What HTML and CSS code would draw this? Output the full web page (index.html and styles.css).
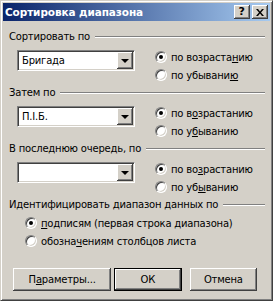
FILE: index.html
```html
<!DOCTYPE html>
<html>
  <head>
    <meta charset="UTF-8" />
    <title>Сортировка диапазона</title>
    <link rel="stylesheet" href="styles.css">
  </head>

  <body>
    <div class="dialog">
      <div class="titlebar">
        <span class="title">Сортировка диапазона</span>
        <div class="title-buttons">
          <div class="tbtn help">?</div>
          <div class="tbtn close">
            <svg width="8" height="7" viewBox="0 0 8 7">
              <path d="M0 0h2l2 2.5L6 0h2L5 3.5 8 7H6L4 4.5 2 7H0l3-3.5z" fill="#000" />
            </svg>
          </div>
        </div>
      </div>

      <div class="content">
        <div class="section">
          <div class="section-head">
            <span>Сортировать по</span>
            <div class="etched"></div>
          </div>
          <div class="section-row">
            <div class="combo">
              <span class="combo-text">Бригада</span>
              <div class="combo-btn"><div class="arrow"></div></div>
            </div>
            <div class="radios">
              <div class="radio-item"><span class="radio checked"></span>по возраста<u>н</u>ию</div>
              <div class="radio-item"><span class="radio"></span>по убывани<u>ю</u></div>
            </div>
          </div>
        </div>

        <div class="section">
          <div class="section-head">
            <span>Затем по</span>
            <div class="etched"></div>
          </div>
          <div class="section-row">
            <div class="combo">
              <span class="combo-text">П.І.Б.</span>
              <div class="combo-btn"><div class="arrow"></div></div>
            </div>
            <div class="radios">
              <div class="radio-item"><span class="radio checked"></span>по в<u>о</u>зрастанию</div>
              <div class="radio-item"><span class="radio"></span>по у<u>б</u>ыванию</div>
            </div>
          </div>
        </div>

        <div class="section">
          <div class="section-head">
            <span>В последнюю очередь, по</span>
            <div class="etched"></div>
          </div>
          <div class="section-row">
            <div class="combo">
              <span class="combo-text"></span>
              <div class="combo-btn"><div class="arrow"></div></div>
            </div>
            <div class="radios">
              <div class="radio-item"><span class="radio checked"></span>по во<u>з</u>растанию</div>
              <div class="radio-item"><span class="radio"></span>по уб<u>ы</u>ванию</div>
            </div>
          </div>
        </div>

        <div class="section">
          <div class="section-head">
            <span>Идентифицировать диапазон данных по</span>
            <div class="etched"></div>
          </div>
          <div class="radios wide">
            <div class="radio-item"><span class="radio checked"></span><u>п</u>одписям (первая строка диапазона)</div>
            <div class="radio-item"><span class="radio"></span>обозна<u>ч</u>ениям столбцов листа</div>
          </div>
        </div>

        <div class="buttons">
          <div class="button params">П<u>а</u>раметры...</div>
          <div class="button default">ОК</div>
          <div class="button">Отмена</div>
        </div>
      </div>
    </div>
  </body>
</html>
```

FILE: styles.css
```css
* {
  box-sizing: border-box;
}

body {
  margin: 0;
  font-family: "DejaVu Sans", "Liberation Sans", sans-serif;
  font-size: 10px;
  letter-spacing: -0.2px;
  background-color: #d4d0c8;
}

.dialog {
  width: 273px;
  height: 301px;
  background-color: #d4d0c8;
  border: 1px solid;
  border-color: #d4d0c8 #404040 #404040 #d4d0c8;
  box-shadow: inset 1px 1px #fff, inset -1px -1px #808080;
  padding: 2px;
  display: flex;
  flex-direction: column;
}

.titlebar {
  height: 18px;
  background: linear-gradient(to right, #0a246a, #a6caf0);
  display: flex;
  align-items: center;
  justify-content: space-between;
  padding: 0 2px 0 2px;
}

.title {
  color: #fff;
  font-weight: bold;
  font-size: 10.5px;
  letter-spacing: -0.1px;
}

.title-buttons {
  display: flex;
  gap: 2px;
}

.tbtn {
  width: 16px;
  height: 14px;
  background-color: #d4d0c8;
  box-shadow: inset -1px -1px #404040, inset 1px 1px #fff, inset -2px -2px #808080;
  display: flex;
  align-items: center;
  justify-content: center;
}

.tbtn.help {
  font-weight: bold;
  font-size: 11px;
  line-height: 14px;
  padding-right: 1px;
}

.content {
  flex: 1;
  padding: 9px 5px 0 6px;
  display: flex;
  flex-direction: column;
}

.section {
  height: 56px;
}

.section-head {
  display: flex;
  align-items: center;
  height: 13px;
  color: #000;
}

.etched {
  flex: 1;
  height: 2px;
  margin-left: 5px;
  border-top: 1px solid #808080;
  border-bottom: 1px solid #fff;
}

.section-row {
  display: flex;
  align-items: flex-start;
  margin-top: 5px;
  padding-left: 8px;
}

.combo {
  width: 118px;
  height: 21px;
  margin-top: 2px;
  background-color: #fff;
  border: 1px solid;
  border-color: #808080 #fff #fff #808080;
  box-shadow: inset 1px 1px #404040, inset -1px -1px #d4d0c8;
  padding: 1px;
  display: flex;
  align-items: center;
}

.combo-text {
  flex: 1;
  padding-left: 3px;
}

.combo-btn {
  width: 16px;
  height: 17px;
  background-color: #d4d0c8;
  box-shadow: inset -1px -1px #404040, inset 1px 1px #fff, inset -2px -2px #808080;
  display: flex;
  align-items: center;
  justify-content: center;
}

.arrow {
  width: 0;
  height: 0;
  border-left: 4px solid transparent;
  border-right: 4px solid transparent;
  border-top: 4px solid #000;
  margin-right: 1px;
}

.radios {
  margin-left: 20px;
  display: flex;
  flex-direction: column;
}

.radios.wide {
  margin-left: 16px;
  margin-top: 3px;
}

.radio-item {
  height: 18px;
  display: flex;
  align-items: center;
}

.radio {
  width: 12px;
  height: 12px;
  margin-right: 4px;
  border-radius: 50%;
  background-color: #fff;
  border: 1px solid;
  border-color: #808080 #fff #fff #808080;
  box-shadow: inset 1px 1px #404040, inset -1px -1px #d4d0c8;
  display: flex;
  align-items: center;
  justify-content: center;
}

.radio.checked::after {
  content: "";
  width: 4px;
  height: 4px;
  border-radius: 50%;
  background-color: #000;
}

.buttons {
  display: flex;
  margin-top: 14px;
  padding-left: 4px;
}

.button {
  width: 70px;
  height: 23px;
  display: flex;
  align-items: center;
  justify-content: center;
  background-color: #d4d0c8;
  box-shadow: inset -1px -1px #404040, inset 1px 1px #fff, inset -2px -2px #808080;
  margin-right: 8px;
}

.button.params {
  width: 102px;
  margin-right: 3px;
}

.button.default {
  border: 1px solid #000;
}
```
